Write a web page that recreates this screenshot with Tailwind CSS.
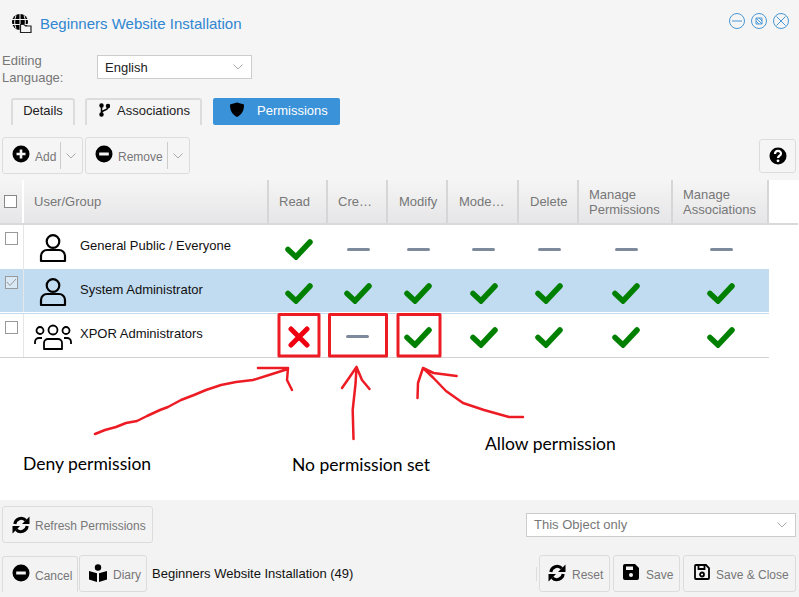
<!DOCTYPE html>
<html lang="en">
<head>
  <meta charset="UTF-8" />
  <title>Beginners Website Installation</title>
  <script src="https://cdn.jsdelivr.net/npm/@tailwindcss/browser@4"></script>
</head>
<body class="bg-[#f5f5f5] font-['Liberation_Sans',Arial,sans-serif] overflow-hidden">
  <svg width="0" height="0" class="absolute">
    <defs>
      <symbol id="check" viewBox="0 0 30 22"><path d="M4 11.5L12 19L26 4" fill="none" stroke="#008000" stroke-width="5.5" stroke-linecap="round" /></symbol>
      <symbol id="plus" viewBox="0 0 18 18"><circle cx="9" cy="9" r="8.5" fill="#000" /><path d="M9 4.5v9M4.5 9h9" stroke="#f5f5f5" stroke-width="2.6" /></symbol>
      <symbol id="minus" viewBox="0 0 18 18"><circle cx="9" cy="9" r="8.5" fill="#000" /><path d="M4.2 9h9.6" stroke="#f5f5f5" stroke-width="3" /></symbol>
      <symbol id="sync" viewBox="0 0 18 18"><path d="M2.800 8a6.400 6.400 0 0 1 11-3.600M15.200 10a6.400 6.400 0 0 1-11 3.600" fill="none" stroke="#000" stroke-width="3" /><path d="M17.500 .5v7.500h-7.500zM.5 17.500v-7.500h7.500z" /></symbol>
      <symbol id="person" viewBox="0 0 28 30"><circle cx="14" cy="8.500" r="6.300" fill="none" stroke="#000" stroke-width="2.200" /><path d="M2 28v-5a6 6 0 0 1 6-6h12a6 6 0 0 1 6 6v5z" fill="none" stroke="#000" stroke-width="2.200" stroke-linejoin="round" /></symbol>
    </defs>
  </svg>

  <div class="flex flex-col h-[597px] w-[799px]">
    <!-- title bar -->
    <div class="flex items-center h-[48px] pl-[11px] pr-[10px]">
      <svg class="w-[21px] h-[21px] -mt-[2px]" viewBox="0 0 21 21">
        <circle cx="9" cy="9" r="8" fill="#000" />
        <path d="M1 6.500h16M1 11.500h16M9 1v16M5 2.500c-1.800 4-1.800 9 0 13M13 2.500c1.800 4 1.800 9 0 13" stroke="#f5f5f5" stroke-width="1" fill="none" />
        <path d="M9.500 19.500v-8h3.500l1.500 1.500h5.500v6.500z" fill="#f5f5f5" stroke="#222" stroke-width="1.200" />
      </svg>
      <h1 class="ml-[8px] text-[15px] text-[#2f86d1]">Beginners Website Installation</h1>
      <div class="ml-auto flex gap-[6px] -mt-[7px]">
        <svg class="w-[16px] h-[16px]" viewBox="0 0 16 16" fill="none" stroke="#4a98d6"><circle cx="8" cy="8" r="7.500" /><path d="M3 8h10" /></svg>
        <svg class="w-[16px] h-[16px]" viewBox="0 0 16 16" fill="none" stroke="#4a98d6"><circle cx="8" cy="8" r="7.500" /><path d="M5 5h6v6H5zM5 5l6 6M8 5l3 3M5 8l3 3" /></svg>
        <svg class="w-[16px] h-[16px]" viewBox="0 0 16 16" fill="none" stroke="#4a98d6"><circle cx="8" cy="8" r="7.500" /><path d="M3.500 3.500l9 9M12.500 3.500l-9 9" /></svg>
      </div>
    </div>

    <!-- language -->
    <div class="flex items-start h-[33px] pl-[2px] mt-[7px]">
      <label class="w-[95px] -mt-[3px] text-[13px] leading-[17px] text-[#777]">Editing<br />Language:</label>
      <div class="flex items-center justify-between w-[155px] h-[24px] pl-[7px] pr-[8px] bg-white border border-[#ccc] text-[13px] text-[#222]">
        <span class="mt-[1px]">English</span>
        <svg class="w-[10px] h-[6px]" viewBox="0 0 10 6" fill="none" stroke="#aaa"><path d="M.5.5L5 5 9.500.5" /></svg>
      </div>
    </div>

    <!-- tabs -->
    <div class="flex h-[27px] pl-[11px] mt-[10px] text-[13px]">
      <div class="flex items-center justify-center w-[64px] pb-[4px] border-2 border-b-0 border-[#dcdcdc] rounded-t-[3px] text-[#222]">Details</div>
      <div class="flex items-center w-[117px] ml-[10px] pl-[12px] pb-[4px] border-2 border-b-0 border-[#dcdcdc] rounded-t-[3px] text-[#222]">
        <svg class="w-[11px] h-[14px] mr-[7px] -mt-[1px]" viewBox="0 0 11 14" fill="none" stroke="#000" stroke-width="1.500"><circle cx="2.500" cy="2.500" r="1.500" fill="#000" /><circle cx="2.500" cy="11.500" r="1.500" fill="#000" /><circle cx="9" cy="3" r="1.500" fill="#000" /><path d="M2.500 3v8M9 4c0 4-6.500 2.500-6.500 6" /></svg>
        Associations
      </div>
      <div class="flex items-center w-[127px] ml-[11px] pl-[17px] pb-[2px] bg-[#3a92d8] rounded-[2px] text-white">
        <svg class="w-[14px] h-[15px] mr-[13px] -mt-[2px]" viewBox="0 0 14 15"><path d="M7 .5L14 2.500c0 6-2 10-7 12.500C2 12.500 0 8.500 0 2.500z" fill="#000" /></svg>
        Permissions
      </div>
    </div>

    <!-- toolbar -->
    <div class="flex items-start h-[43px] pl-[2px] pr-[3px] mt-[12px] text-[12px] text-[#777]">
      <button class="flex items-center w-[81px] h-[37px] pl-[9px] border border-[#dcdcdc] rounded-[3px]">
        <svg class="w-[18px] h-[18px] -mt-[3px]"><use href="#plus" /></svg>
        <span class="ml-[5px] mt-[3px]">Add</span>
        <span class="flex items-center ml-[4px] pl-[5px] h-[27px] border-l border-[#ccc]"><svg class="w-[10px] h-[6px]" viewBox="0 0 10 6" fill="none" stroke="#aaa"><path d="M.5.5L5 5 9.500.5" /></svg></span>
      </button>
      <button class="flex items-center w-[105px] h-[37px] ml-[2px] pl-[9px] border border-[#dcdcdc] rounded-[3px]">
        <svg class="w-[18px] h-[18px] -mt-[3px]"><use href="#minus" /></svg>
        <span class="ml-[5px] mt-[3px]">Remove</span>
        <span class="flex items-center ml-[4px] pl-[5px] h-[27px] border-l border-[#ccc]"><svg class="w-[10px] h-[6px]" viewBox="0 0 10 6" fill="none" stroke="#aaa"><path d="M.5.5L5 5 9.500.5" /></svg></span>
      </button>
      <button class="flex items-center justify-center w-[37px] h-[34px] mt-[2px] ml-auto border border-[#dcdcdc] rounded-[3px]">
        <svg class="w-[18px] h-[18px]" viewBox="0 0 18 18"><circle cx="9" cy="9" r="8.500" /><path d="M6 7c0-4 6-4 6-.5 0 2.500-3 2-3 4.500" fill="none" stroke="#fff" stroke-width="2.200" /><circle cx="9" cy="13.800" r="1.400" fill="#fff" /></svg>
      </button>
    </div>

    <!-- grid -->
    <div class="flex-1 bg-white">
      <div class="h-[45px] w-[798px] border-b-2 border-[#d9d9d9]">
        <div class="grid grid-cols-[24px_245px_59px_60px_60px_71px_60px_94px_96px] w-[769px] h-full text-[13px] leading-[15px] text-[#777] bg-gradient-to-b from-[#f5f5f5] to-[#e6e6e8]">
          <div class="flex items-center justify-center border-r-2 border-white"><span class="block w-[13px] h-[13px] -ml-[1px] bg-white border border-[#888]"></span></div>
          <div class="flex items-center pl-[10px] border-r-2 border-[#d6d6d6]">User/Group</div>
          <div class="flex items-center pl-[10px] border-r-2 border-[#d6d6d6]">Read</div>
          <div class="flex items-center pl-[10px] border-r-2 border-[#d6d6d6]">Cre…</div>
          <div class="flex items-center pl-[11px] border-r-2 border-[#d6d6d6]">Modify</div>
          <div class="flex items-center pl-[11px] border-r-2 border-[#d6d6d6]">Mode…</div>
          <div class="flex items-center pl-[11px] border-r-2 border-[#d6d6d6]">Delete</div>
          <div class="flex items-center pl-[10px] border-r-2 border-[#d6d6d6]">Manage<br />Permissions</div>
          <div class="flex items-center pl-[10px] border-r-2 border-[#d6d6d6]">Manage<br />Associations</div>
        </div>
      </div>

      <div id="rows" class="text-[13px] text-[#111]"></div>
      <div class="h-px w-[769px] bg-[#d2d2d2]"></div>
    </div>

    <!-- footer -->
    <div class="h-[97px] bg-[#f3f3f3] text-[12px] text-[#777]">
      <div class="flex items-start h-[55px] pl-[2px] pr-[3px] pt-[6px]">
        <button class="flex items-center w-[151px] h-[37px] pl-[9px] border border-[#dcdcdc] rounded-[3px]">
          <svg class="w-[18px] h-[18px]"><use href="#sync" /></svg>
          <span class="ml-[5px] mt-[2px]">Refresh Permissions</span>
        </button>
        <div class="flex items-center justify-between w-[270px] h-[24px] mt-[7px] ml-auto pl-[7px] pr-[8px] bg-white border border-[#ccc] text-[13px]">
          <span>This Object only</span>
          <svg class="w-[10px] h-[6px]" viewBox="0 0 10 6" fill="none" stroke="#aaa"><path d="M.5.5L5 5 9.500.5" /></svg>
        </div>
      </div>
      <div class="flex items-start h-[42px] pl-[2px] pr-[3px]">
        <button class="flex items-center w-[76px] h-[36px] mt-[1px] pl-[9px] border border-b-0 border-[#dcdcdc] rounded-t-[3px]">
          <svg class="w-[18px] h-[18px] -mt-[4px]"><use href="#minus" /></svg>
          <span class="ml-[5px] mt-[3px]">Cancel</span>
        </button>
        <button class="flex items-center w-[68px] h-[37px] ml-[1px] pl-[8px] border border-[#dcdcdc] rounded-[3px]">
          <svg class="w-[20px] h-[18px] -mt-[2px]" viewBox="0 0 20 18"><circle cx="10" cy="3.500" r="3.200" /><path d="M1 7l8 2.200V18l-8-2.500zM19 7l-8 2.200V18l8-2.500z" /></svg>
          <span class="ml-[5px] mt-[3px]">Diary</span>
        </button>
        <span class="ml-[5px] mt-[9px] text-[13px] text-[#111]">Beginners Website Installation (49)</span>
        <span class="ml-auto mt-[12px] h-[14px] w-px bg-[#ddd]"></span>
        <button class="flex items-center w-[71px] h-[37px] ml-[2px] pl-[8px] border border-[#dcdcdc] rounded-[3px]">
          <svg class="w-[18px] h-[18px] -mt-[2px]"><use href="#sync" /></svg>
          <span class="ml-[6px] mt-[3px]">Reset</span>
        </button>
        <button class="flex items-center w-[67px] h-[37px] ml-[3px] pl-[9px] border border-[#dcdcdc] rounded-[3px]">
          <svg class="w-[16px] h-[16px] -mt-[3px]" viewBox="0 0 16 16"><path d="M2 0h10l4 4v10a2 2 0 0 1-2 2H2a2 2 0 0 1-2-2V2a2 2 0 0 1 2-2z" /><path d="M3 2.500h7v3.500H3z" fill="#f3f3f3" /><circle cx="8" cy="11" r="2" fill="#f3f3f3" /></svg>
          <span class="ml-[7px] mt-[3px]">Save</span>
        </button>
        <button class="flex items-center w-[113px] h-[37px] ml-[3px] pl-[10px] border border-[#dcdcdc] rounded-[3px]">
          <svg class="w-[16px] h-[16px] -mt-[3px]" viewBox="0 0 16 16" fill="none" stroke="#000" stroke-width="1.800"><path d="M2 1h10l3 3v10a1 1 0 0 1-1 1H2a1 1 0 0 1-1-1V2a1 1 0 0 1 1-1z" /><path d="M4.500 1v4h6V1" /><circle cx="8" cy="10.500" r="2" /></svg>
          <span class="ml-[6px] mt-[3px]">Save &amp; Close</span>
        </button>
      </div>
    </div>
  </div>

  <!-- hand drawn notes over the page -->
  <svg class="absolute left-0 top-0 pointer-events-none" width="799" height="597" fill="none" stroke="#ed1c24" stroke-width="2.500" stroke-linejoin="round" stroke-linecap="round">
    <rect x="279" y="314.500" width="40" height="41.500" stroke-width="3" stroke-linecap="butt" />
    <rect x="329.500" y="314.500" width="57" height="41.500" stroke-width="3" stroke-linecap="butt" />
    <rect x="398" y="314.500" width="42" height="41.500" stroke-width="3" stroke-linecap="butt" />
    <path d="M95 434L105 430 116 427 126 423 137 421 147 416 160 410 168 407 181 400 194 395 206 390 221 385 236 382 253 380 269 375 288 369M258 368H288L287 380 292 390" />
    <path d="M353.500 439L352.700 410 355.600 383 356.500 367M342 388L349 378 356.500 367 362 380 369.500 389" />
    <path d="M523 417L509 417 484 410 463 403 446 391 433.500 378 423 368M417.500 398L418 383 423 368 433.500 373 456.600 376" />
  </svg>
  <span class="absolute left-[23px] top-[453px] font-['Lato',sans-serif] text-[17.5px] leading-[22px] text-black">Deny permission</span>
  <span class="absolute left-[292px] top-[454px] font-['Lato',sans-serif] text-[17.5px] leading-[22px] text-black">No permission set</span>
  <span class="absolute left-[485px] top-[433px] font-['Lato',sans-serif] text-[17.5px] leading-[22px] text-black">Allow permission</span>

  <script>
    const check = '<svg class="w-[30px] h-[22px]"><use href="#check" /></svg>';
    const dash = '<span class="block w-[23px] h-[3px] rounded-full bg-[#7d8a9c]"></span>';
    const cross = '<svg class="w-[22px] h-[22px]" viewBox="0 0 22 22"><path d="M3 3l16 16M19 3L3 19" stroke="#ee0010" stroke-width="5" stroke-linecap="round" /></svg>';
    const person = '<svg class="w-[28px] h-[30px]"><use href="#person" /></svg>';
    const people = '<svg class="w-[38px] h-[26px]" viewBox="0 0 38 26" fill="none" stroke="#000" stroke-width="1.800"><circle cx="19" cy="6" r="4.500" /><circle cx="6" cy="6.500" r="3.500" /><circle cx="32" cy="6.500" r="3.500" /><path d="M10 25v-6a4 4 0 0 1 4-4h10a4 4 0 0 1 4 4v6z" stroke-linejoin="round" /><path d="M1 20v-2a4 4 0 0 1 4-4h3M37 20v-2a4 4 0 0 0-4-4h-3" /></svg>';
    const rows = [
      { name: "General Public / Everyone", icon: person, bg: "", iconTop: "pt-[8px]", nameTop: "pt-[11px]", cellTop: "pt-[4px]", cells: [check, dash, dash, dash, dash, dash, dash] },
      { name: "System Administrator", icon: person, bg: "bg-[#c1dbf0] border-b border-white", iconTop: "pt-[8px]", nameTop: "pt-[11px]", cellTop: "pt-[4px]", ticked: true, cells: [check, check, check, check, check, check, check] },
      { name: "XPOR Administrators", icon: people, bg: "border-t border-[#c1dbf0]", iconTop: "pt-[10px]", nameTop: "pt-[10px]", cellTop: "pt-[2px]", focus: 1, cells: [cross, dash, check, check, check, check, check] },
    ];
    document.getElementById("rows").innerHTML = rows.map(row => `
      <div class="grid grid-cols-[24px_245px_59px_60px_60px_71px_60px_94px_96px] w-[769px] h-[44px] ${row.bg}">
        <div class="pl-[5px] pt-[7px] border-r border-[#e6e6e6]">
          <span class="flex items-center justify-center w-[13px] h-[13px] bg-white/40 border border-[#999]">${row.ticked ? '<svg class="w-[11px] h-[9px]" viewBox="0 0 11 9" fill="none" stroke="#999"><path d="M1 4l3 3.500L10 1" /></svg>' : ''}</span>
        </div>
        <div class="flex items-start">
          <span class="flex justify-center w-[56px] pl-[2px] ${row.iconTop}">${row.icon}</span>
          <span class="${row.nameTop}">${row.name}</span>
        </div>
        ${row.cells.map((c, i) => `<div class="flex items-center justify-center ${row.cellTop} ${row.focus === i ? 'border-r border-[#5aa0dc]' : ''}">${c}</div>`).join("")}
      </div>
    `).join("");
  </script>
</body>
</html>
